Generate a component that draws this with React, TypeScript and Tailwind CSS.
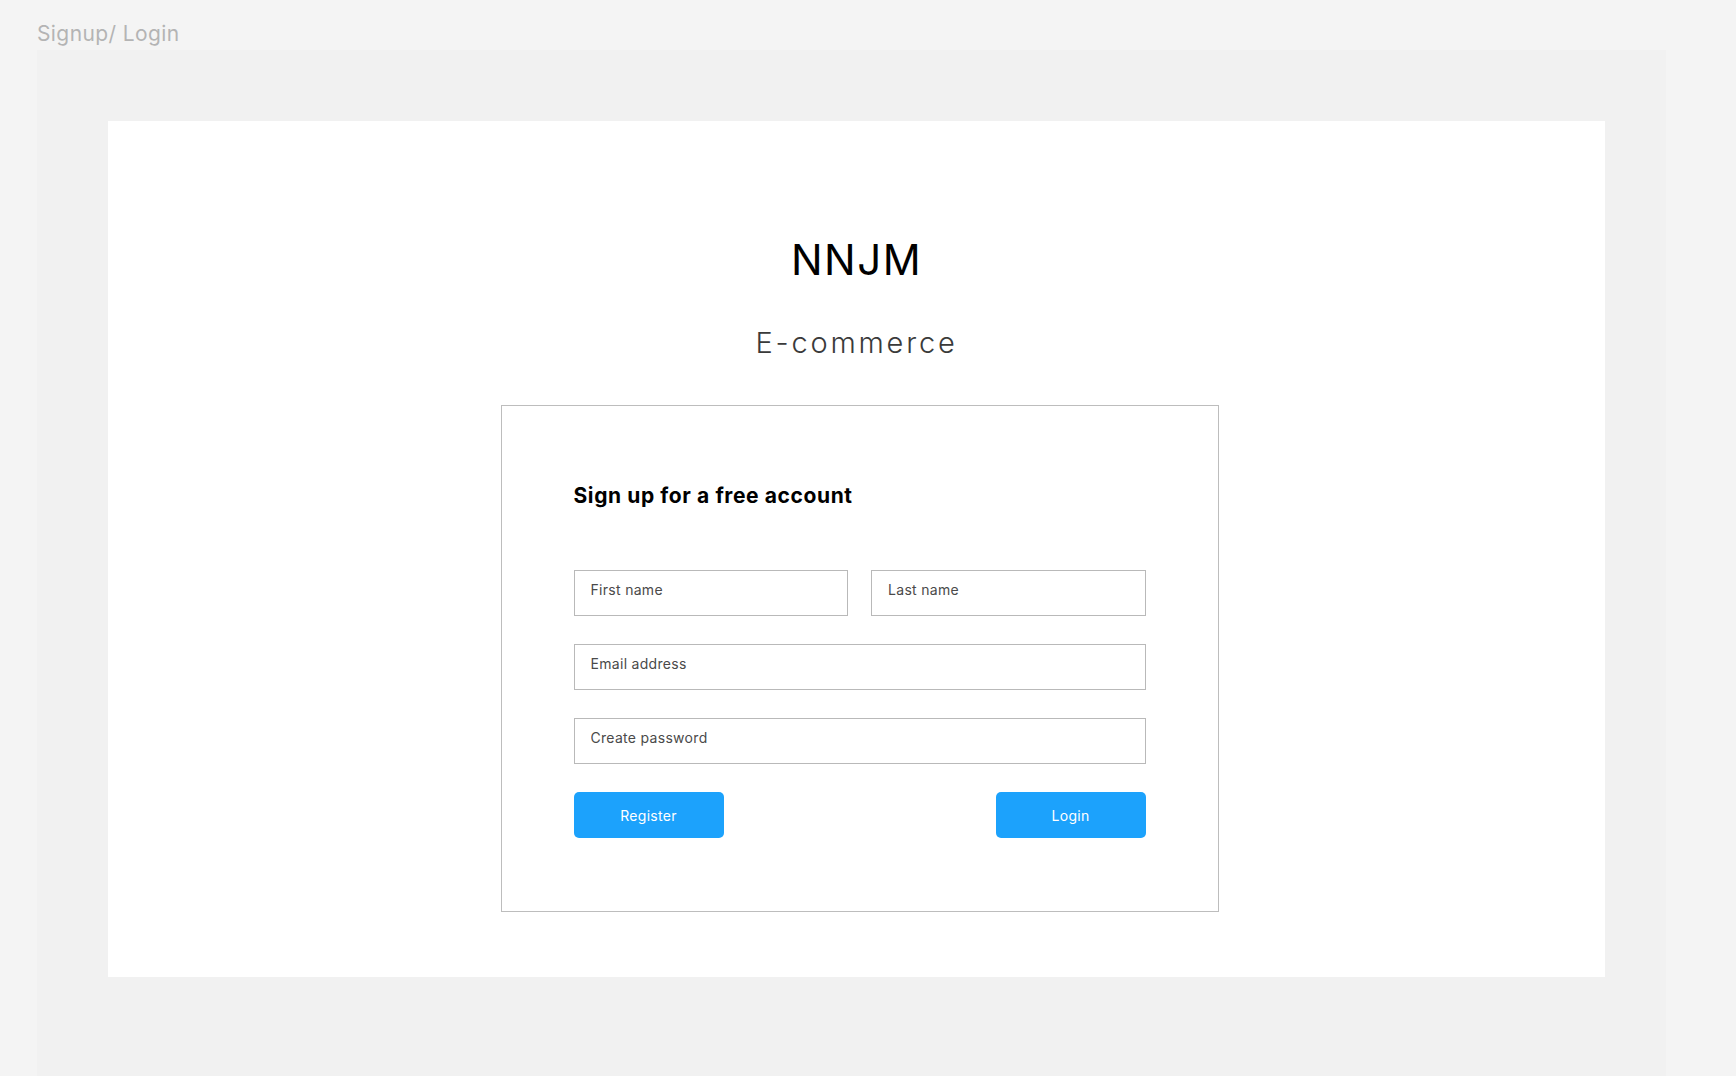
const fieldClass =
  "w-full h-[46px] border border-[#b9b9b9] bg-white pl-4 pt-[11px] pb-[19px] text-[14px] leading-[14px] tracking-[0.3px] text-[#333] placeholder:text-[#4a4a4a] outline-none";

const btnClass =
  "w-[150px] h-[46px] rounded-[5px] bg-[#1ca2fc] text-white text-[14px] tracking-[0.3px]";

export default function App() {
  return (
    <div
      className="h-screen flex flex-col bg-[#f4f4f4] pl-[37px] overflow-hidden"
      style={{ fontFamily: "Inter, 'Noto Sans', sans-serif" }}
    >
      <div className="pt-[23px] h-[50px] text-[21px] leading-none tracking-[0.4px] text-[#b4b4b4]">Signup/ Login</div>

      <div className="flex-1 w-[1629px] bg-[#f1f1f1] pl-[71px] pt-[71px]">
        <div className="w-[1497px] h-[856px] bg-white flex flex-col items-center pt-[118px]">
          <h1 className="text-[42px] leading-none text-black tracking-[1.5px]">NNJM</h1>
          <h2 className="mt-[47px] text-[29px] leading-none text-[#3a3a3a] tracking-[2.8px] font-light">E-commerce</h2>

          <div className="mt-[48px] ml-[6px] w-[718px] h-[507px] border border-[#bdbdbd] px-[72px] pt-[79px]">
            <h3 className="text-[21px] leading-none font-bold tracking-[0.6px] text-black">Sign up for a free account</h3>

            <form className="mt-[64px] flex flex-col gap-[28px]" onSubmit={(e) => e.preventDefault()}>
              <div className="flex gap-[23px]">
                <input className={fieldClass} placeholder="First name" />
                <input className={fieldClass} placeholder="Last name" />
              </div>
              <input className={fieldClass} placeholder="Email address" type="email" />
              <input className={fieldClass} placeholder="Create password" type="password" />
              <div className="flex justify-between">
                <button type="submit" className={btnClass}>Register</button>
                <button type="button" className={btnClass}>Login</button>
              </div>
            </form>
          </div>
        </div>
      </div>
    </div>
  );
}
